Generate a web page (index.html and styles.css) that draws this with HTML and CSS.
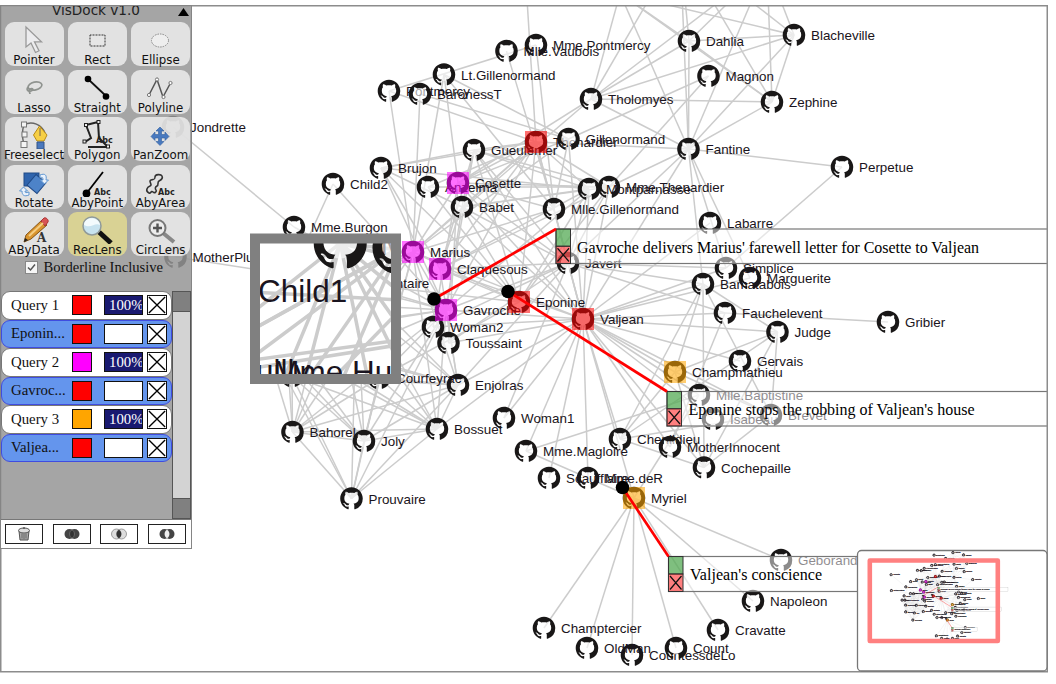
FILE: index.html
```html
<!DOCTYPE html>
<html lang="en">
<head>
<meta charset="utf-8">
<title>VisDock</title>
<link rel="stylesheet" href="styles.css">
</head>
<body>
<main class="stage">
  <svg class="canvas" width="1056" height="684" viewBox="0 0 1056 684">
    <defs>
      <clipPath id="frameClip"><rect x="1" y="6" width="1046" height="666"/></clipPath>
      <clipPath id="lensClip"><rect x="260" y="243" width="131" height="131"/></clipPath>
      <clipPath id="mapClip"><rect x="858" y="551" width="188" height="120"/></clipPath>
      <g id="cat">
        <circle class="face" cx="8" cy="7.6" r="5"/>
        <path d="M8 0C3.58 0 0 3.58 0 8c0 3.54 2.29 6.53 5.47 7.59.4.07.55-.17.55-.38 0-.19-.01-.82-.01-1.49-2.01.37-2.53-.49-2.69-.94-.09-.23-.48-.94-.82-1.13-.28-.15-.68-.52-.01-.53.63-.01 1.08.58 1.23.82.72 1.21 1.87.87 2.33.66.07-.52.28-.87.51-1.07-1.78-.2-3.64-.89-3.64-3.95 0-.87.31-1.59.82-2.15-.08-.2-.36-1.02.08-2.12 0 0 .67-.21 2.2.82.64-.18 1.32-.27 2-.27.68 0 1.36.09 2 .27 1.53-1.04 2.2-.82 2.2-.82.44 1.1.16 1.92.08 2.12.51.56.82 1.27.82 2.15 0 3.07-1.87 3.75-3.65 3.95.29.25.54.73.54 1.48 0 1.07-.01 1.93-.01 2.2 0 .21.15.46.55.38A8.013 8.013 0 0016 8c0-4.42-3.58-8-8-8z"/>
      </g>
    </defs>
    <g clip-path="url(#frameClip)">
      <g id="graph"></g>
      <g id="notes"></g>
    </g>
    <g clip-path="url(#lensClip)">
      <rect class="paper" x="255" y="238" width="141" height="141"/>
      <use href="#graph" transform="translate(325 309) scale(2.35) translate(-325 -309)"/>
    </g>
    <rect class="lens-frame" x="255" y="238.5" width="141" height="140.5"/>
    <rect class="frame" x="0.75" y="5.75" width="1046.5" height="666"/>
    <rect class="map-box" x="857.5" y="550.5" width="189.5" height="120.5" rx="4"/>
    <g clip-path="url(#mapClip)">
      <g class="map-graph" transform="translate(870 560) scale(.122) translate(0 -6)">
        <use href="#graph"/><use href="#notes"/>
      </g>
    </g>
    <rect class="map-view" x="869.8" y="560.5" width="128" height="80.5"/>
  </svg>

  <aside class="dock">
    <header class="dock-head"><span class="dock-title">VisDock v1.0</span><svg class="dock-tri" width="11" height="8"><path d="M0 8L5.5 0 11 8z"/></svg></header>
    <div class="tools">
      <div class="tool"><svg viewBox="0 0 59 32"><path d="M21 5v20l5-4 4.500 9.500 3.500-1.700-4.500-9h7z" fill="#ececee" stroke="#999" stroke-width="1.300"/></svg><span>Pointer</span></div>
      <div class="tool"><svg viewBox="0 0 59 32"><rect x="22" y="13" width="15" height="11" fill="#e6e6e6" stroke="#333" stroke-dasharray="1 .5"/></svg><span>Rect</span></div>
      <div class="tool"><svg viewBox="0 0 59 32"><ellipse cx="29" cy="18.500" rx="8.500" ry="6.500" fill="#eee" stroke="#888" stroke-dasharray="1.500 1"/></svg><span>Ellipse</span></div>
      <div class="tool"><svg viewBox="0 0 59 32"><g fill="none" stroke="#8f938f" stroke-width="1.700"><ellipse cx="30" cy="16" rx="7" ry="4" transform="rotate(-12 30 16)"/><path d="M23 17c-2 3 0 5 3 4s2-3-1-2c-2 1 0 4 0 5"/></g></svg><span>Lasso</span></div>
      <div class="tool"><svg viewBox="0 0 59 32"><path d="M20 9L38 26" stroke="#111" stroke-width="1.800"/><circle cx="20" cy="9" r="3.300"/><circle cx="38" cy="26.500" r="3.300"/></svg><span>Straight</span></div>
      <div class="tool"><svg viewBox="0 0 59 32"><path d="M18 25L26 9.500 32 27 39.500 13" fill="none" stroke="#555" stroke-width="1.500"/><g fill="#fff" stroke="#777"><circle cx="18" cy="25" r="1.600"/><circle cx="26" cy="9.500" r="1.600"/><circle cx="32.500" cy="27" r="1.600"/><circle cx="39.500" cy="13" r="1.600"/></g></svg><span>Polyline</span></div>
      <div class="tool"><svg viewBox="0 0 59 32"><path d="M19 28C17 20 17 13 19 8c8-5 18 0 21 8" fill="none" stroke="#666" stroke-width="1.400"/><g fill="#f4f4f4" stroke="#777"><rect x="16.500" y="5" width="5" height="5"/><rect x="17" y="15" width="5" height="5"/><rect x="16" y="24.500" width="6" height="6"/></g><path d="M34.500 9l-6 9 3.500 6h7l3-6z" fill="#f6cf45" stroke="#b98a14"/><path d="M35 11v8" stroke="#765"/><path d="M32 25h7v7h-7z" fill="#4a78bd" stroke="#345487"/></svg><span>Freeselect</span></div>
      <div class="tool"><svg viewBox="0 0 59 32"><path d="M18 8l12-3 1 16 9 9H20M18 8l5 13-6 4" fill="none" stroke="#222" stroke-width="2"/><g stroke="#222" fill="#eee"><rect x="16.500" y="6.500" width="3" height="3"/><rect x="29" y="3.500" width="3" height="3"/><rect x="15" y="23" width="3" height="3"/><rect x="38.500" y="28" width="3" height="3"/></g><text class="abc" x="28" y="26">Abc</text></svg><span>Polygon</span></div>
      <div class="tool"><svg viewBox="0 0 59 32"><path d="M29 10l4 4h-2.500v3.500H34V15l4 4.500-4 4V21h-3.500v3.500H33l-4 4-4-4h2.500V21H24v2.500l-4-4 4-4.500v2.500h3.500V14H25z" fill="#4879bf" stroke="#3060a0" stroke-width=".6"/></svg><span>PanZoom</span></div>
      <div class="tool"><svg viewBox="0 0 59 32"><rect x="19" y="8" width="15" height="13" fill="#2f64ad" stroke="#204a86"/><rect x="25" y="12" width="13" height="14" transform="rotate(40 31.500 19)" fill="#4d83c8" stroke="#204a86"/><path d="M35 10c5-2 7 0 6 5h2.500l-4 4-4-4H38c0-3-1-3-3-2zM24 30c-5 2-7 0-7-4h-2.500l4-4 4 4H20c0 2 1 2 4 1z" fill="#e9f1fb" stroke="#5e96d2"/></svg><span>Rotate</span></div>
      <div class="tool"><svg viewBox="0 0 59 32"><path d="M35 7L18 29" stroke="#000" stroke-width="1.800"/><circle cx="18.500" cy="28.500" r="3.900"/><text class="abc" x="26" y="30">Abc</text></svg><span>AbyPoint</span></div>
      <div class="tool"><svg viewBox="0 0 59 32"><path d="M18 28c-4-2-2-6 1-7s-2-5 1-6 4 0 4-3 6-3 7-1-1 4-3 5 0 4-2 5-2 3-1 4-1 4-3 2-2 2-4 1z" fill="none" stroke="#333" stroke-width="1.600"/><text class="abc" x="27" y="30">Abc</text></svg><span>AbyArea</span></div>
      <div class="tool"><svg viewBox="0 0 59 32"><path d="M19 30l2-7L37 8l5 5-16 14z" fill="#d9952e" stroke="#855417"/><path d="M36 9l3-3c2-1 5 2 4 4l-3 4z" fill="#d85454" stroke="#a33"/><path d="M24 24L38 11" stroke="#f5cd82" stroke-width="2"/><path d="M19 30l1-4 3 2z" fill="#222"/><text class="big-a" x="32" y="30">A</text></svg><span>AByData</span></div>
      <div class="tool active"><svg viewBox="0 0 59 32"><path d="M31 20L43 31" stroke="#111" stroke-width="5"/><circle cx="24" cy="14" r="9" fill="#c8e3ef" stroke="#909a9a" stroke-width="1.500"/><path d="M16 13c0-9 15-9 16 0-5-3-9 4-16 0z" fill="#f4fbfd"/></svg><span>RecLens</span></div>
      <div class="tool"><svg viewBox="0 0 59 32"><path d="M32 21L43 30" stroke="#888" stroke-width="4"/><circle cx="26.500" cy="16" r="8" fill="#ececec" stroke="#777" stroke-width="2"/><path d="M26.500 11.500v9M22 16h9" stroke="#555" stroke-width="2.400"/></svg><span>CircLens</span></div>
    </div>
    <label class="inclusive"><svg width="13" height="13"><rect x=".5" y=".5" width="12" height="12" fill="#f6f6f6" stroke="#888"/><path d="M3 6.500L5.500 9 10 3.500" fill="none" stroke="#555" stroke-width="1.500"/></svg><span>Borderline Inclusive</span></label>
    <section class="queries">
      <div class="rows">
        <div class="row"><span class="name">Query 1</span><i class="swatch red"></i><b class="pct full">100%</b><svg class="close" viewBox="0 0 20 20"><path d="M1 1l18 18M19 1L1 19"/></svg></div>
        <div class="row note"><span class="name">Eponin...</span><i class="swatch red"></i><b class="pct"></b><svg class="close" viewBox="0 0 20 20"><path d="M1 1l18 18M19 1L1 19"/></svg></div>
        <div class="row"><span class="name">Query 2</span><i class="swatch magenta"></i><b class="pct full">100%</b><svg class="close" viewBox="0 0 20 20"><path d="M1 1l18 18M19 1L1 19"/></svg></div>
        <div class="row note"><span class="name">Gavroc...</span><i class="swatch red"></i><b class="pct"></b><svg class="close" viewBox="0 0 20 20"><path d="M1 1l18 18M19 1L1 19"/></svg></div>
        <div class="row"><span class="name">Query 3</span><i class="swatch orange"></i><b class="pct full">100%</b><svg class="close" viewBox="0 0 20 20"><path d="M1 1l18 18M19 1L1 19"/></svg></div>
        <div class="row note"><span class="name">Valjea...</span><i class="swatch red"></i><b class="pct"></b><svg class="close" viewBox="0 0 20 20"><path d="M1 1l18 18M19 1L1 19"/></svg></div>
      </div>
      <div class="scroll"><i></i><i></i></div>
    </section>
    <footer class="ops">
      <div class="op"><svg width="16" height="16"><path d="M3 5h10l-1 9H4z" fill="#aaa" stroke="#555"/><ellipse cx="8" cy="4.500" rx="5.500" ry="2.500" fill="#ddd" stroke="#555"/><path d="M6 7.500v5M8 8v5M10 7.500v5" stroke="#666"/><path d="M7 2h2" stroke="#333"/></svg></div>
      <div class="op"><svg width="16" height="12"><circle cx="5.500" cy="6" r="5" fill="#444"/><circle cx="10.500" cy="6" r="5" fill="#444"/><path d="M8 1.700a5 5 0 010 8.600 5 5 0 010-8.600" fill="#333" stroke="#777" stroke-width=".7"/></svg></div>
      <div class="op"><svg width="16" height="12"><g fill="#ddd" stroke="#888" stroke-width=".8"><circle cx="5.500" cy="6" r="5"/><circle cx="10.500" cy="6" r="5"/></g><path d="M8 1.700a5 5 0 010 8.600 5 5 0 010-8.600" fill="#333"/></svg></div>
      <div class="op"><svg width="16" height="12"><circle cx="5.500" cy="6" r="5" fill="#444"/><circle cx="10.500" cy="6" r="5" fill="#444"/><path d="M8 1.700a5 5 0 010 8.600 5 5 0 010-8.600" fill="#eee"/></svg></div>
    </footer>
  </aside>
</main>
<script src="graph.js"></script>
</body>
</html>
```
FILE: styles.css
```css
body { margin: 0; background: #fff; overflow: hidden; }
.stage { position: relative; width: 1056px; height: 684px; }
.canvas { display: block; }
.paper { fill: #fff; }
.frame { fill: none; stroke: #8c8c8c; stroke-width: 1.5; }
.link { stroke: #ccc; stroke-width: 1.5; }
.face { fill: #fff; fill-opacity: .6; }
.cat { fill: #191717; }
.label { font: 13.4px "Liberation Sans", Arial, sans-serif; fill: #1a1420; }
.mark { fill-opacity: .56; stroke: none; }
.note-box { fill: #fff; fill-opacity: .5; stroke: #777; stroke-width: 1.2; }
.note-ok { fill: #008000; fill-opacity: .5; stroke: #333; }
.note-del { fill: #f00; fill-opacity: .5; stroke: #333; }
.note-x { stroke: #111; stroke-width: 1.2; }
.note-text { font: 16px "Liberation Serif", "Times New Roman", serif; fill: #000; }
.lead { stroke: #f00; stroke-width: 2.7; }
.lens-frame { fill: none; stroke: #808080; stroke-width: 10; }
.map-box { fill: #fff; stroke: #777; stroke-width: 1.3; }
.map-graph { stroke: #221a28; stroke-width: 1.4; }
.map-view { fill: none; stroke: #ff8080; stroke-width: 4.6; stroke-linejoin: round; }

.dock { position: absolute; left: 0; top: 5px; width: 192px; height: 544px; box-sizing: border-box; border: 1px solid #858585; border-left-width: 1.5px; background: rgba(149, 149, 149, .85); overflow: hidden; display: flex; flex-direction: column; }
.dock-head { position: relative; height: 16px; flex: none; text-align: center; }
.dock-title { display: block; margin-top: -4px; font: 13.6px/17px "DejaVu Sans", Verdana, sans-serif; color: #222; }
.dock-tri { position: absolute; right: 2px; top: 2px; }
.tools { display: grid; grid-template-columns: repeat(3, 59px); grid-auto-rows: 44px; gap: 3.5px 4.3px; padding-left: 3.5px; }
.tool { display: flex; flex-direction: column; align-items: center; border-radius: 9px; background: rgba(255, 255, 255, .68); }
.tool.active { background: #d9d294; }
.tool svg { width: 59px; height: 32px; flex: none; }
.tool span { font: 11.8px/12px "DejaVu Sans", Verdana, sans-serif; color: #111; white-space: nowrap; }
.abc { font: bold 8px "DejaVu Sans", sans-serif; fill: #222; }
.big-a { font: bold 12px "DejaVu Serif", serif; fill: #333; }
.inclusive { display: flex; align-items: center; gap: 5.500px; height: 18px; margin: 2px 0 0 24px; font: 14.6px/18px "Liberation Serif", serif; color: #111; white-space: nowrap; }
.queries { display: flex; height: 228px; margin-top: auto; flex: none; }
.rows { width: 170.500px; display: flex; flex-direction: column; }
.row { height: 28.5px; flex: none; box-sizing: border-box; display: flex; align-items: center; padding-left: 9px; border: 1px solid #777; border-radius: 9px; background: #fff; font: 14.8px "Liberation Serif", "Times New Roman", serif; color: #111; }
.row.note { background: #6495ed; border-color: #3f4ce0; }
.name { width: 61px; white-space: nowrap; }
.swatch { box-sizing: border-box; width: 20px; height: 20px; border: 1px solid #111; margin-right: 12px; }
.red { background: #f00; }
.magenta { background: #f0f; }
.orange { background: #ffa500; }
.pct { box-sizing: border-box; width: 39px; height: 20px; border: 1px solid #111; background: #fff; margin-right: 4px; padding-left: 4px; overflow: hidden; font: 14.8px/18px "Liberation Serif", serif; color: #fff; }
.pct.full { background: #191970; }
.close { box-sizing: border-box; width: 20px; height: 20px; border: 1px solid #111; background: #fff; }
.close path { stroke: #000; stroke-width: 1.5; }
.scroll { flex: 1; box-sizing: border-box; border: 1px solid #555; background: #d3d3d3; display: flex; flex-direction: column; justify-content: space-between; }
.scroll i { height: 19px; background: #808080; outline: 1px solid #555; }
.ops { height: 29px; flex: none; box-sizing: border-box; border-top: 1px solid #777; background: #fff; display: flex; align-items: center; gap: 9.6px; padding-left: 4px; }
.op { box-sizing: border-box; width: 38px; height: 20px; border: 1px solid #222; display: flex; align-items: center; justify-content: center; }
```
FILE: graph.js
```javascript
// Character co-occurrence network: name, x, y of each node centre.
const nodes = [
  ["Myriel",634,498],["Napoleon",753,601],["Mlle.Baptistine",699,395],["Mme.Magloire",526,451],
  ["CountessdeLo",632,655],["Geborand",781,560],["Champtercier",544,628],["Cravatte",718,630],
  ["Count",676,648],["OldMan",587,648],["Labarre",710,223],["Valjean",583,319],
  ["Marguerite",750,278],["Mme.deR",588,478],["Isabeau",713,419],["Gervais",740,361],
  ["Tholomyes",591,99],["Listolier",680,-54],["Fameuil",767,-35],["Blacheville",794,35],
  ["Favourite",620,-6.5],["Dahlia",689,41],["Zephine",772,102],["Fantine",688.5,149],
  ["Mme.Thenardier",609,187],["Thenardier",536,142],["Cosette",458,183],["Javert",568,263],
  ["Fauchelevent",725,313],["Bamatabois",703,284],["Perpetue",842,167],["Simplice",726,268],
  ["Scaufflaire",549,478],["Woman1",504,418],["Judge",777.5,332],["Champmathieu",675,372],
  ["Brevet",771,415],["Chenildieu",620,439],["Cochepaille",704,467.5],["Pontmercy",389,91],
  ["Boulatruelle",525,-33],["Eponine",519,302],["Anzelma",428,187],["Woman2",433,327],
  ["MotherInnocent",670,447],["Gribier",888,322],["Jondrette",173,127],["Mme.Burgon",294,227],
  ["Gavroche",446,310],["Gillenormand",568.5,139],["Magnon",708.5,76],["Mlle.Gillenormand",554,209],
  ["Mme.Pontmercy",536,45],["Mlle.Vaubois",506.5,51],["Lt.Gillenormand",444,74.5],["Marius",413,252],
  ["BaronessT",420,94],["Mabeuf",331.5,281],["Enjolras",458,385],["Combeferre",292,376],
  ["Prouvaire",351.5,498.5],["Feuilly",263,335],["Courfeyrac",379,378],["Bahorel",292.5,432],
  ["Bossuet",437,429],["Joly",364,441],["Grantaire",356.5,283],["MotherPlutarch",175.5,257],
  ["Gueulemer",474,150],["Babet",462,207],["Claquesous",440,269],["Montparnasse",589,189],
  ["Toussaint",448.5,343],["Child1",279.5,301],["Child2",333,184],["Brujon",381,168],
  ["Mme.Hucheloup",286,335.5]
];

// Each entry lists the neighbours that a node links to.
const links = {
  1:[0],2:[0],3:[0,2],4:[0],5:[0],6:[0],7:[0],8:[0],9:[0],11:[10,3,2,0],12:[11],13:[11],14:[11],15:[11],
  17:[16],18:[16,17],19:[16,17,18],20:[16,17,18,19],21:[16,17,18,19,20],22:[16,17,18,19,20,21],
  23:[16,17,18,19,20,21,22,12,11],24:[23,11],25:[24,23,11],26:[24,11,16,25],27:[11,23,25,24,26],
  28:[11,27],29:[23,27,11],30:[23],31:[30,11,23,27],32:[11],33:[11,27],34:[11,29],35:[11,34,29],
  36:[34,35,11,29],37:[34,35,36,11,29],38:[34,35,36,37,11,29],39:[25],40:[25],41:[24,25],
  42:[41,25,24],43:[11,26,27],44:[28,11],45:[28],47:[46],48:[47,25,27,11],49:[26,11],50:[49,24],
  51:[49,26,11],52:[51,39],53:[51],54:[51,49,26],55:[51,49,39,54,26,11,16,25,41,48],56:[49,55],
  57:[55,41,48],58:[55,48,27,57,11],59:[58,55,48,57],60:[48,58,59],61:[48,58,60,59,57,55],
  62:[55,58,59,48,57,41,61,60],63:[59,48,62,57,58,55,61,60],64:[55,62,48,63,58,59,61,60,57,11],
  65:[63,64,48,62,58,59,61,60,57,55],66:[64,58,59,62,65,48,63,61,60],67:[57],
  68:[25,11,24,27,48,41],69:[25,68,11,24,27,48,41],70:[25,69,68,11,24,27,41,58],
  71:[69,68,70,11,48,27,41,25],72:[26,27,11],73:[48],74:[48,73],75:[69,68,25,48,41,70,71],
  76:[64,65,66,63,62,48,58]
};

const marks = {25:"#f00",41:"#f00",11:"#f00",26:"#f0f",55:"#f0f",70:"#f0f",48:"#f0f",0:"#ffa500",35:"#ffa500"};

const notes = [
  {x:556,y:229,w:575,h:34.5,tx:577,tw:402,px:434,py:299,t:"Gavroche delivers Marius' farewell letter for Cosette to Valjean"},
  {x:667,y:391.5,w:409,h:34.5,tx:688.5,tw:286,px:508,py:291.5,t:"Eponine stops the robbing of Valjean's house"},
  {x:668.5,y:556.5,w:209,h:35,tx:690,tw:132,px:622.5,py:487.5,t:"Valjean's conscience"}
];

let out = "";
for (const [a, list] of Object.entries(links)) {
  for (const b of list) {
    const p = nodes[a], q = nodes[b];
    out += `<line class="link" x1="${p[1]}" y1="${p[2]}" x2="${q[1]}" y2="${q[2]}"/>`;
  }
}
nodes.forEach(([name, x, y]) => {
  out += `<use class="cat" href="#cat" transform="translate(${x - 11.3} ${y - 11.3}) scale(1.41)"/>`;
  out += `<text class="label" x="${x + 17}" y="${y + 5}">${name}</text>`;
});
for (const [i, color] of Object.entries(marks)) {
  out += `<rect class="mark" x="${nodes[i][1] - 11}" y="${nodes[i][2] - 11}" width="22" height="22" fill="${color}"/>`;
}
document.getElementById("graph").innerHTML = out;

document.getElementById("notes").innerHTML = notes.map(n => {
  const h = n.h / 2, m = n.y + h, e = n.y + n.h;
  return `<rect class="note-box" x="${n.x}" y="${n.y}" width="${n.w}" height="${n.h}"/>
    <rect class="note-ok" x="${n.x}" y="${n.y}" width="14.500" height="${h}"/>
    <rect class="note-del" x="${n.x}" y="${m}" width="14.500" height="${h}"/>
    <path class="note-x" d="M${n.x + 1.5} ${m + 2}L${n.x + 13} ${e - 2}M${n.x + 13} ${m + 2}L${n.x + 1.5} ${e - 2}"/>
    <text class="note-text" x="${n.tx}" y="${n.y + 23.7}" textLength="${n.tw}">${n.t}</text>
    <line class="lead" x1="${n.px}" y1="${n.py}" x2="${n.x}" y2="${n.y}"/>
    <circle cx="${n.px}" cy="${n.py}" r="6.800"/>`;
}).join("");
```
